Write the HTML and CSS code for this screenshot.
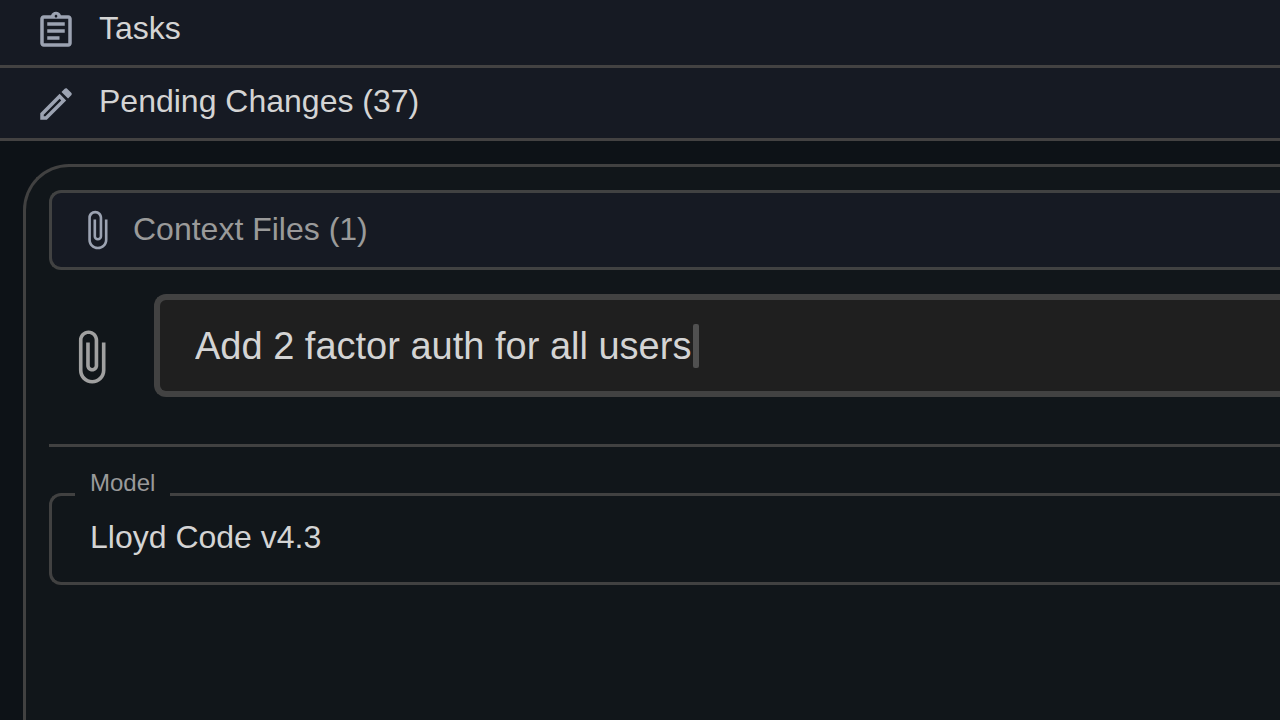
FILE: index.html
```html
<!DOCTYPE html>
<html lang="en">
<head>
    <meta charset="UTF-8">
    <meta name="viewport" content="width=device-width, initial-scale=1.0">
    <title>Lloyd Code</title>
    <link rel="stylesheet" href="styles.css">
</head>
<body>
    <button class="row" type="button">
        <svg class="icon" viewBox="0 0 24 24" aria-hidden="true">
            <path d="M7 15h7v2H7zm0-4h10v2H7zm0-4h10v2H7zm12-4h-4.18C14.4 1.84 13.3 1 12 1c-1.3 0-2.4.84-2.82 2H5c-1.1 0-2 .9-2 2v14c0 1.1.9 2 2 2h14c1.1 0 2-.9 2-2V5c0-1.1-.9-2-2-2zm-7-.25c.41 0 .75.34.75.75s-.34.75-.75.75-.75-.34-.75-.75.34-.75.75-.75zM19 19H5V5h14v14z"/>
        </svg>
        <span class="row-label">Tasks</span>
    </button>
    <button class="row" type="button">
        <svg class="icon" viewBox="0 0 24 24" aria-hidden="true">
            <path d="M14.06 9.02l.92.92L5.92 19H5v-.92l9.06-9.06M17.66 3c-.25 0-.51.1-.7.29l-1.83 1.83 3.75 3.75 1.83-1.83c.39-.39.39-1.02 0-1.41l-2.34-2.34c-.2-.2-.45-.29-.71-.29zm-3.6 3.19L3 17.25V21h3.75L17.81 9.94l-3.75-3.75z"/>
        </svg>
        <span class="row-label">Pending Changes (37)</span>
    </button>

    <form class="panel">
        <button class="context" type="button">
            <svg class="icon" viewBox="0 0 24 24" aria-hidden="true">
                <path d="M16.5 6v11.5c0 2.21-1.79 4-4 4s-4-1.79-4-4V5c0-1.38 1.12-2.5 2.5-2.5s2.5 1.12 2.5 2.5v10.5c0 .55-.45 1-1 1s-1-.45-1-1V6H10v9.5c0 1.38 1.12 2.5 2.5 2.5s2.5-1.12 2.5-2.5V5c0-2.21-1.79-4-4-4S7 2.79 7 5v12.5c0 3.04 2.46 5.5 5.5 5.5s5.5-2.46 5.5-5.5V6h-1.5z"/>
            </svg>
            <span class="context-label">Context Files (1)</span>
        </button>

        <div class="prompt">
            <button class="attach" type="button" aria-label="Attach file">
                <svg class="attach-icon" viewBox="0 0 24 24" aria-hidden="true">
                    <path d="M16.5 6v11.5c0 2.21-1.79 4-4 4s-4-1.79-4-4V5c0-1.38 1.12-2.5 2.5-2.5s2.5 1.12 2.5 2.5v10.5c0 .55-.45 1-1 1s-1-.45-1-1V6H10v9.5c0 1.38 1.12 2.5 2.5 2.5s2.5-1.12 2.5-2.5V5c0-2.21-1.79-4-4-4S7 2.79 7 5v12.5c0 3.04 2.46 5.5 5.5 5.5s5.5-2.46 5.5-5.5V6h-1.5z"/>
                </svg>
            </button>
            <div class="prompt-box">
                <input class="prompt-input" type="text" aria-label="Message" value="Add 2 factor auth for all users">
                <span class="caret"></span>
            </div>
        </div>

        <hr class="divider">

        <div class="model">
            <label class="model-label" for="model">Model</label>
            <select class="model-select" id="model">
                <option>Lloyd Code v4.3</option>
            </select>
        </div>
    </form>
</body>
</html>
```
FILE: styles.css
```css
* {
    box-sizing: border-box;
}

body {
    margin: 0;
    min-height: 100vh;
    display: flex;
    flex-direction: column;
    background-color: #0d1217;
    color: #d4d4d4;
    font-family: "Liberation Sans", Arial, sans-serif;
    font-size: 32px;
    line-height: 36px;
}

button,
input,
select {
    margin: 0;
    font: inherit;
    color: inherit;
}

/* Collapsed section headers */
.row {
    display: flex;
    align-items: center;
    gap: 22px;
    width: 100%;
    padding: 15px 35px 13px;
    border: none;
    border-bottom: 3px solid #434242;
    background-color: #161a23;
    text-align: left;
    cursor: pointer;
}

.row:first-child {
    padding-top: 10px;
}

.row-label {
    padding-bottom: 6px;
}

.icon {
    flex: none;
    width: 42px;
    height: 42px;
    fill: #9ca3b2;
}

/* Chat panel */
.panel {
    flex: 1;
    margin: 23px 0 0 23px;
    padding: 23px 0 0 23px;
    border: 3px solid #414141;
    border-right: none;
    border-bottom: none;
    border-top-left-radius: 46px;
    background-color: #11161a;
}

.context {
    display: flex;
    align-items: center;
    gap: 15px;
    width: 100%;
    height: 80px;
    padding: 0 24px;
    border: 3px solid #414242;
    border-right: none;
    border-radius: 12px 0 0 12px;
    background-color: #161a23;
    color: #9a9a9a;
    text-align: left;
    cursor: pointer;
}

.context-label {
    padding-bottom: 3px;
}

.prompt {
    display: flex;
    align-items: flex-end;
    gap: 34px;
    margin-top: 24px;
    padding-left: 13px;
}

.attach {
    flex: none;
    margin-bottom: 11px;
    padding: 0;
    border: none;
    background: none;
    cursor: pointer;
}

.attach-icon {
    display: block;
    width: 58px;
    height: 58px;
    fill: #a0a0a0;
}

.prompt-box {
    flex: 1;
    display: flex;
    align-items: center;
    height: 103px;
    padding-left: 35px;
    border: 6px solid #424242;
    border-right: none;
    border-radius: 12px 0 0 12px;
    background-color: #1f1f1f;
}

.prompt-input {
    field-sizing: content;
    padding: 0 2px 0 0;
    border: none;
    outline: none;
    background: none;
    font-size: 38px;
    line-height: 44px;
}

.caret {
    width: 6px;
    height: 44px;
    border-radius: 2px;
    background-color: #505050;
}

.divider {
    height: 3px;
    margin: 47px 0 46px;
    border: none;
    background-color: #414141;
}

/* Outlined select, the label sits in the border */
.model {
    position: relative;
}

.model-label {
    position: absolute;
    top: -24px;
    left: 26px;
    padding: 0 15px;
    background-color: #11161a;
    color: #9a9a9a;
    font-size: 24px;
    line-height: 28px;
}

.model-select {
    display: block;
    width: 100%;
    height: 92px;
    padding: 0 38px 4px;
    border: 3px solid #414141;
    border-right: none;
    border-radius: 12px 0 0 12px;
    outline: none;
    appearance: none;
    background-color: #11161a;
}
```
